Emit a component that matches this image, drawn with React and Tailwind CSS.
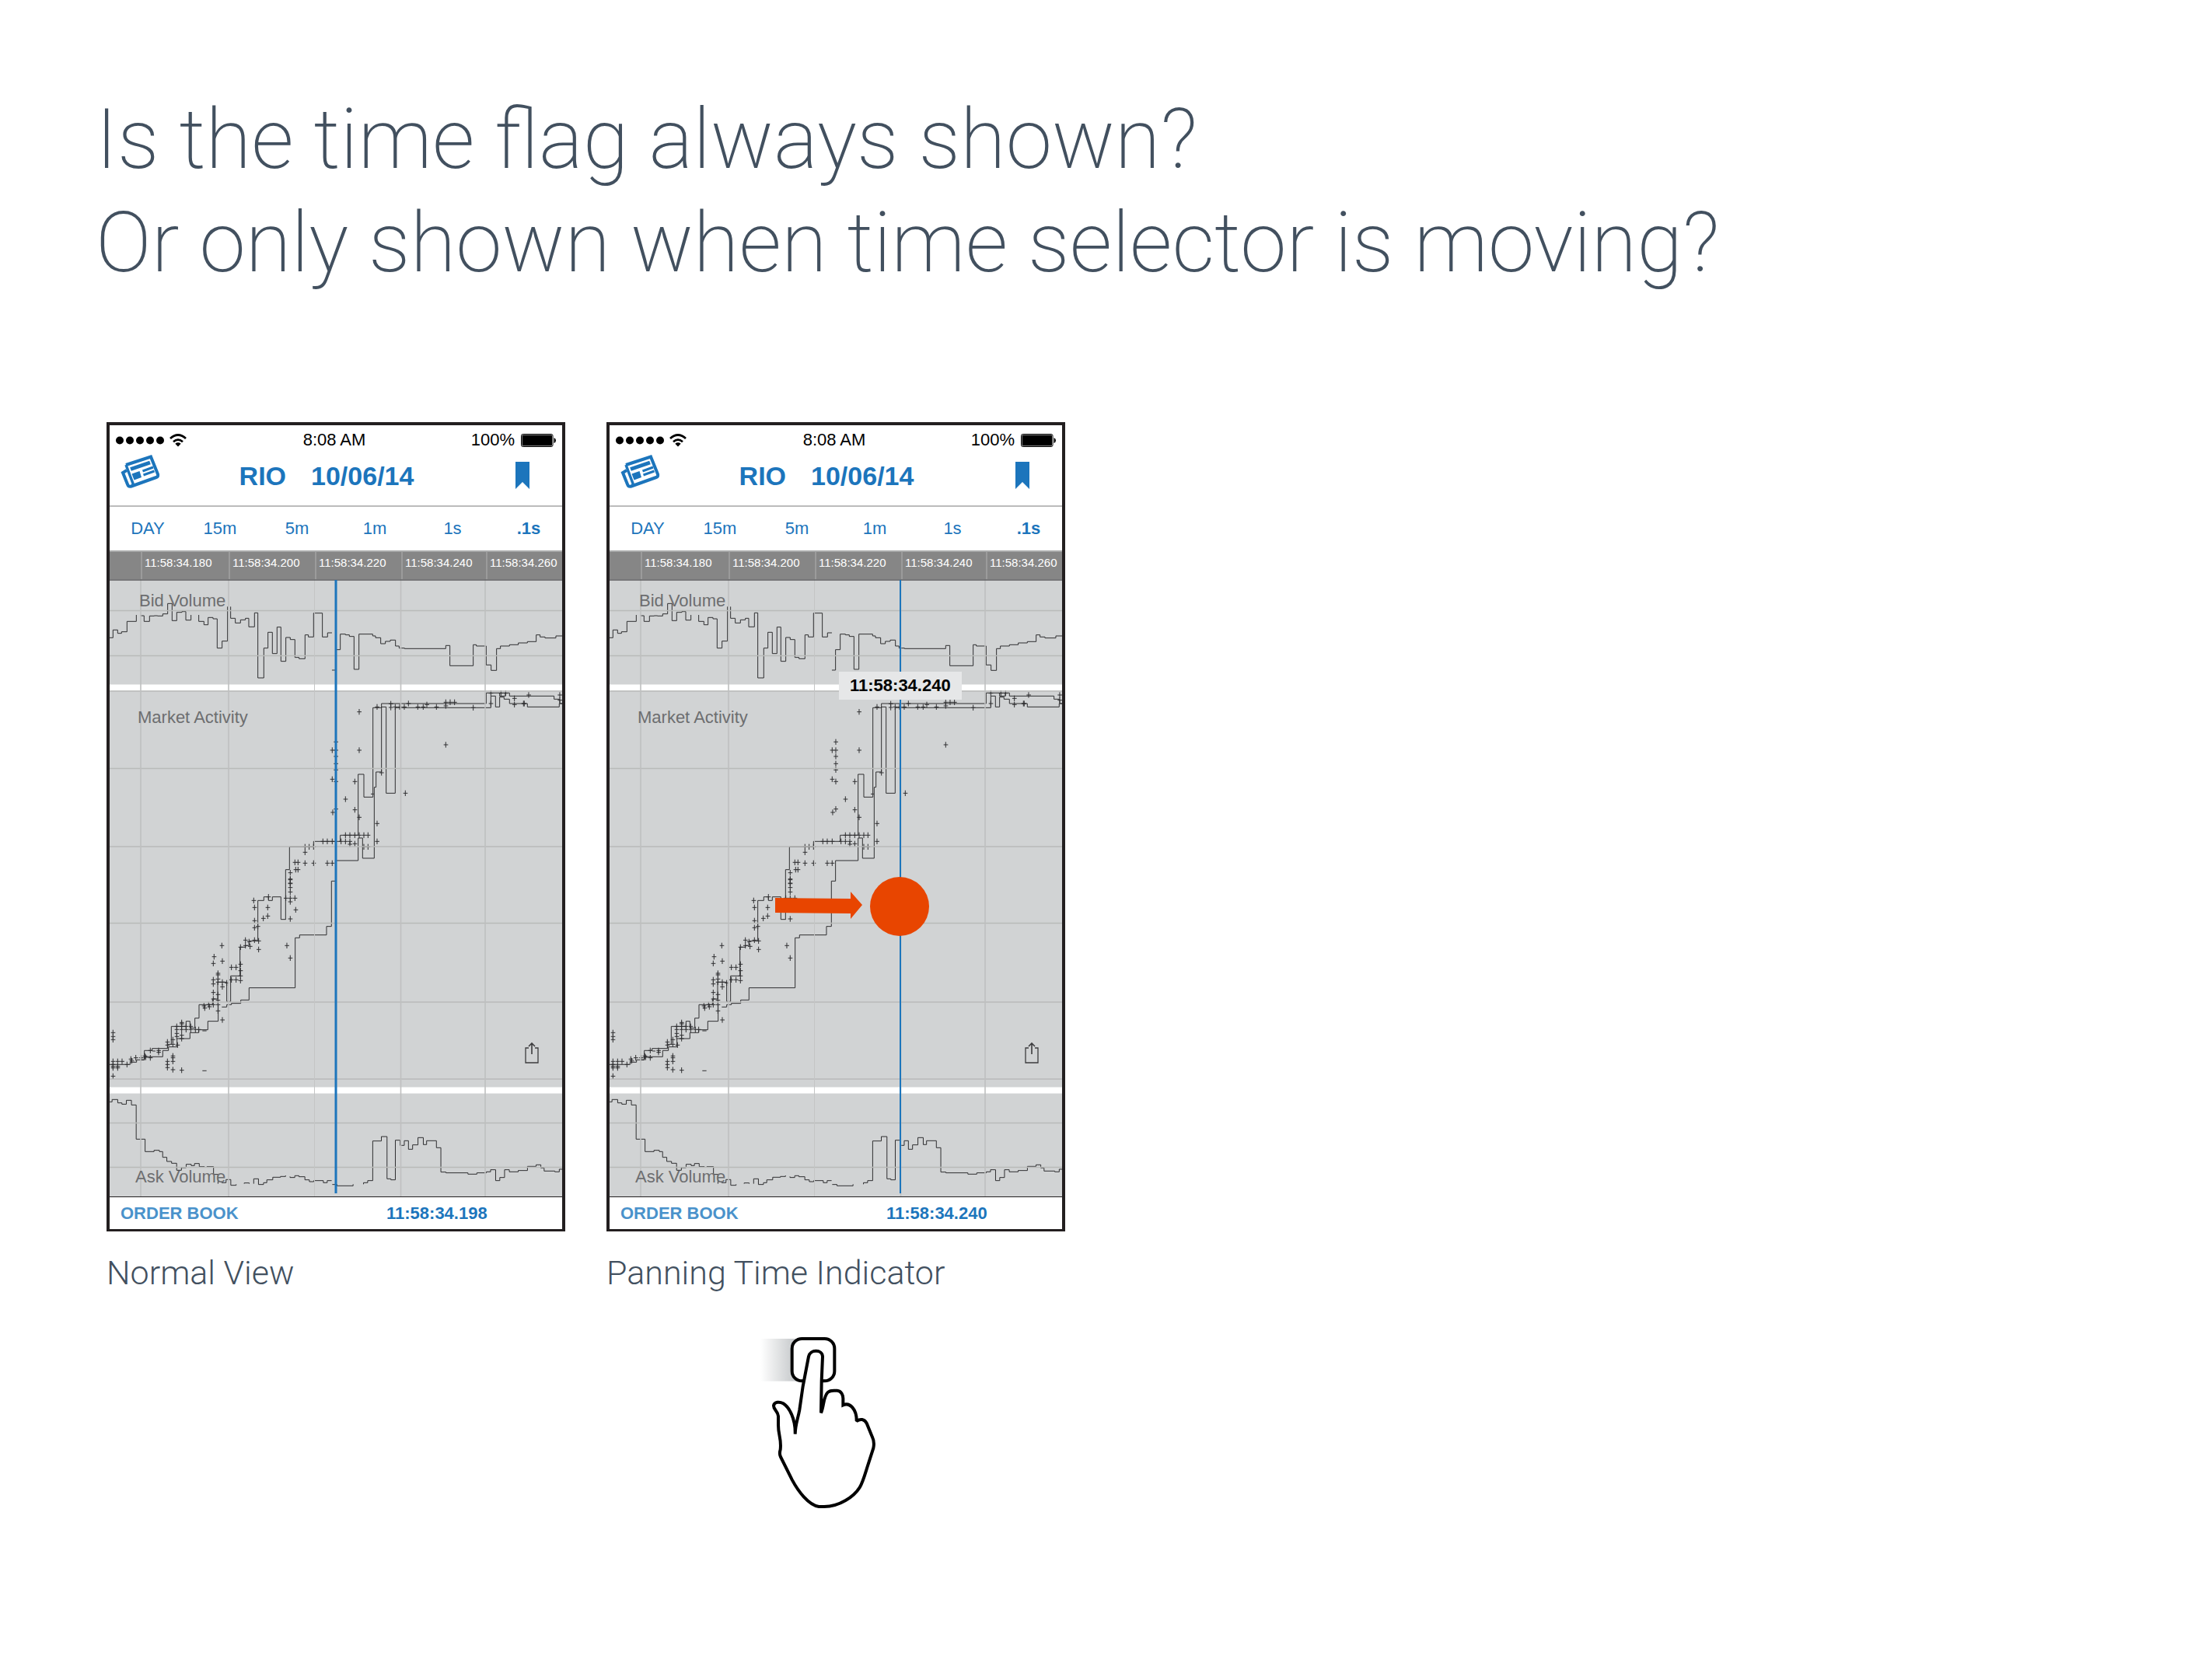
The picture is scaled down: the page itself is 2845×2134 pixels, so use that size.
import React from "react";

const TRACE = "fill-none stroke-[#2f2f31] stroke-[1px]";

const BID_LEFT =
  "M33 241H46V211H64V224H79V218H100V178H136V153M151 156H166V178H187V157H205V156H218V157H238V149H257V109H274V175H292V143H312V140H327V173H347V153M377 153V178H397V191H413V163H432V168H448V281H467V254H488V121M500 121V166H518V184H538V172H557V166H570V199H592V145H605V396H628V281H644V220H661V302H679V200H694V332H713V240H730V248H748V317H764V322H787V230H800V238H820V146H854V238H874V222H891M891 366H905V287H909";
const BID_RIGHT =
  "M9 287H23V227H43V230H58V236H76V363H95V227H148V234H159V241H179V264H197V255H216V250H236V273H250V281H271V283H430V271H446V349H536V268H548V273H586V346H605V367H626V283H641V273H676V268H710V261H745V256H779V230H794V238H813V242H855V234H880";
const MARKET_UPPER =
  "M-188 908V716H-173V628H-80V607H23V583H92V348H114V436H149V91H182V75H586V34H676V46H848V58H870V75H880";
const MARKET_INNER =
  "M5 681H92V594H109V672H154V398H161V339H182V88H200V421H235V91H604V46H622V88H638V50H655V58H676V75H745V88H868V75H880M638 34V46H660V34";
const MARKET_LOW =
  "M33 718H112V709H137V700H167V664H197V656H257V640H271V571H328V551H343V577H362V539H378V487H430V465H450V400H485V475H500V376H536V265H557V259H571V241H605V85H628V71H646V85H661V71H694V158H713M155 700H167V688H238V664H260V650H293V618H343V595H377V584H412V551H452V487M466 496H485V487H503V482H539V469H571V422H749V229H766V218H870V185H889V10H905V-69";
const ASK =
  "M29 82H37V73H56V86H70V91H85V76H102V94H118V226H148V274H178V269H196V274H207V296H221V312H237V319H254V346H270V336H286V323H303V328H314V320H330V332H348M355 332H378V362H393V398M405 394H420V382H436V404H454V400M481 398V395H498V398M513 398V379H529V401H546V394H557V383H577V373H603V370H620V366M635 370V374H651V367H665V371H685V383H700V390H715V386H747V394H760V386H775M777 401H793V406H847V400M882 400V394H896V386H913V233H942V216H961V379H974V383H989V230H1005V250H1019V232H1033V265H1047V248H1065V220H1083V247H1094V232H1127V259H1142V353H1159V356H1233V361H1263V356H1295V352H1309V344H1326V386H1340V374H1356V344H1372V352H1402V347H1433V331H1462V325H1478V337H1489V349H1525V352H1540V342H1552";

const TRADES_LOW = [
  [46, 595], [46, 610], [46, 622], [46, 706], [46, 718], [46, 725], [46, 731], [46, 763], [64, 706], [64, 725],
  [64, 731], [81, 706], [100, 718], [115, 697], [118, 704], [134, 692], [155, 692], [169, 685], [172, 690],
  [190, 664], [190, 692], [222, 664], [222, 671], [256, 631], [256, 643], [256, 706], [256, 718], [256, 730],
  [277, 622], [277, 640], [277, 685], [277, 692], [277, 706], [277, 738], [292, 571], [292, 583], [292, 598],
  [292, 610], [295, 643], [311, 556], [311, 561], [311, 571], [311, 583], [311, 605], [311, 618], [311, 740],
  [328, 571], [328, 583], [346, 571], [346, 583], [364, 583], [377, 583], [397, 492], [400, 500], [415, 487],
  [418, 495], [433, 328], [436, 302], [433, 391], [433, 407], [433, 440], [433, 465], [433, 487], [451, 366],
  [451, 372], [451, 388], [451, 400], [451, 448], [451, 470], [451, 487], [451, 511], [466, 259], [468, 319],
  [468, 400], [468, 418], [468, 546], [485, 403], [503, 343], [521, 343], [503, 391], [521, 391], [538, 331],
  [538, 356], [538, 376], [538, 394], [538, 265], [557, 238], [557, 259], [571, 244], [575, 262], [592, 238],
  [608, 241], [608, 274], [592, 163], [592, 190], [605, 185], [592, 112], [589, 85], [626, 154], [643, 145],
  [643, 112], [646, 71], [713, 76], [730, 76], [748, 76], [751, 121], [730, 156], [730, 90], [717, 259],
  [730, 307], [730, 52], [730, 35], [730, 20], [730, 5],
];
const TRADES_MID = [
  [730, 728], [730, 752], [730, 768], [748, 688], [760, 688], [751, 716], [760, 716], [787, 649], [787, 628],
  [803, 628], [820, 628], [787, 691], [820, 691], [873, 691], [892, 691], [856, 607], [873, 607], [892, 607],
  [894, 495], [892, 367], [892, 255], [906, 223], [906, 255], [906, 279], [906, 307], [906, 331], [906, 376],
  [906, 482],
];
const TRADES_HIGH = [
  [96, 107], [96, 255], [79, 376], [43, 444], [79, 485], [96, 514], [165, 538], [165, 607], [26, 607], [43, 607],
  [60, 607], [43, 583], [60, 583], [79, 583], [96, 583], [114, 583], [130, 583], [60, 618], [79, 616],
  [114, 628], [130, 628], [165, 88], [218, 76], [218, 90], [235, 88], [252, 88], [270, 88], [286, 75], [322, 88],
  [343, 88], [357, 79], [394, 88], [430, 70], [430, 84], [447, 70], [464, 70], [536, 91], [430, 234], [274, 421],
  [182, 342], [604, 35], [604, 75], [643, 35], [661, 35], [695, 55], [695, 79], [730, 75], [733, 75], [750, 42],
  [870, 42], [870, 62],
];

const plus = (points) => points.map(([x, y]) => `M${x - 8} ${y}h17M${x} ${y - 11}v22`).join("");

function Trace({ d, at, scale = "0.3333" }) {
  return (
    <g transform={`translate(${at}) scale(${scale})`}>
      <path d={d} vectorEffect="non-scaling-stroke" className={TRACE} />
    </g>
  );
}

function Chart({ selector, panning }) {
  return (
    <svg viewBox="0 0 582 795" className="block h-auto w-full" role="img" aria-label="Market activity chart">
      <rect width="582" height="795" fill="#d1d3d4" />
      <rect y="135" width="582" height="9" fill="#e9eaea" />
      <rect y="136" width="582" height="7" fill="#ffffff" />
      <rect y="653" width="582" height="9" fill="#e9eaea" />
      <rect y="654" width="582" height="7" fill="#ffffff" />
      <Trace d={BID_LEFT} at="-11 -5" />
      <Trace d={BID_RIGHT} at="289 -5" />
      <Trace d={MARKET_UPPER} at="289 135" />
      <Trace d={MARKET_INNER} at="289 135" />
      <Trace d={MARKET_LOW} at="-11 385" />
      <Trace d={plus(TRADES_LOW) + "M391 588h16M391 742h16M198 666h12"} at="-11 385" />
      <Trace d={plus(TRADES_MID)} at="-11 135" />
      <Trace d={plus(TRADES_HIGH) + "M141 424h12"} at="289 135" />
      <Trace d={ASK} at="-11 645" scale="0.3827 0.3333" />
      <path
        d="M0 40.5H582M0 98.5H582M0 144H582M0 243.5H582M0 344H582M0 442.5H582M0 544H582M0 643H582M0 699.5H582M0 756.5H582"
        stroke="#b9bab9"
        strokeWidth="1.4"
      />
      <path d="M40 0V795M153 0V795M374.5 0V795M483 0V795" stroke="#bfc0c0" strokeWidth="1.6" />
      <path d="M263.5 0V795" stroke="#c4c5c5" strokeWidth="1" />
      <path d="M0 1H582" stroke="#58595b" strokeWidth="1.5" />
      <path d="M0 794.5H582" stroke="#231f20" strokeWidth="1" />
      <path d={`M${selector} 1V790`} stroke="#1c75bc" strokeWidth={panning ? "2" : "3"} />
      {panning && (
        <g fill="#e84500">
          <circle cx="373" cy="421" r="38" />
          <path d="M213 410L310 411V402L325 419L310 437V430L213 429Z" />
        </g>
      )}
    </svg>
  );
}

function NewsIcon() {
  return (
    <svg viewBox="0 0 52 44" className="h-11 w-13" fill="none" stroke="#1c75bc">
      <path d="M7 13L39 2.500L48 25Q49 28 46 29L14 40.500Q10 41.500 9 38L3 23L8 20" strokeWidth="4" />
      <path d="M7 13L16 37Q16.500 39 14 40" strokeWidth="3.500" />
      <path d="M13 18.500L38 10" strokeWidth="5" />
      <path d="M28.500 21L42 16M29.500 26L43.500 21" strokeWidth="3" />
      <path d="M14.500 24.500L24.500 21L27 29L17.500 32.500Z" fill="#1c75bc" stroke="none" />
    </svg>
  );
}

function WifiIcon() {
  return (
    <svg viewBox="0 0 22 17" className="h-[17px] w-[22px]" fill="none" stroke="#000" strokeWidth="2.800">
      <path d="M1 6Q11 -3 21 6" />
      <path d="M5 10.200Q11 5 17 10.200" />
      <path d="M11 16.500L7.300 12.700Q11 9.800 14.700 12.700Z" fill="#000" stroke="none" />
    </svg>
  );
}

function StatusBar() {
  return (
    <div className="grid h-[38px] grid-cols-[1fr_auto_1fr] items-center px-2 text-[22px] leading-7 text-black">
      <div className="flex items-center gap-[7px]">
        <svg viewBox="0 0 62 10" className="h-[11px] w-[62px]">
          {[5, 18, 31, 44, 57].map((x) => (
            <circle key={x} cx={x} cy="5" r="5" />
          ))}
        </svg>
        <WifiIcon />
      </div>
      <span className="pr-1">8:08 AM</span>
      <div className="flex items-center justify-end gap-2">
        <span>100%</span>
        <svg viewBox="0 0 45 17" className="h-[17px] w-[45px]">
          <rect x="0.500" y="0.500" width="40.500" height="16" rx="2" fill="#fff" stroke="#000" />
          <rect x="1.500" y="1.500" width="38.500" height="14" rx="1" />
          <path d="M42.500 5Q45 6 45 8.500T42.500 12Z" />
        </svg>
      </div>
    </div>
  );
}

const RANGES = ["DAY", "15m", "5m", "1m", "1s", ".1s"];
const TICKS = ["", "11:58:34.180", "11:58:34.200", "11:58:34.220", "11:58:34.240", "11:58:34.260"];

function Phone({ time, selector, panning }) {
  return (
    <div className="w-full border-4 border-b-[3px] border-[#231f20] bg-white font-['Liberation_Sans',Arial,sans-serif]">
      <StatusBar />
      <header className="grid h-[67px] grid-cols-[1fr_auto_1fr] items-center border-b-2 border-[#bcbcbc] pr-[42px] pb-3 pl-[14px] text-[#1c75bc]">
        <button type="button" aria-label="News" className="self-start justify-self-start">
          <NewsIcon />
        </button>
        <h2 className="flex gap-8 pl-1 text-[34px] leading-10 font-bold">
          <span>RIO</span>
          <span>10/06/14</span>
        </h2>
        <button type="button" aria-label="Bookmark" className="justify-self-end">
          <svg viewBox="0 0 18 35" className="h-[35px] w-[18px]" fill="#1c75bc">
            <path d="M0 0H18V35L9 26L0 35Z" />
          </svg>
        </button>
      </header>
      <nav className="grid h-14 grid-cols-[98fr_88fr_110fr_90fr_110fr_86fr] items-center text-[22px] leading-7 text-[#1c75bc]">
        {RANGES.map((label) => (
          <button key={label} type="button" className={label === ".1s" ? "text-center font-bold" : "text-center"}>
            {label}
          </button>
        ))}
      </nav>
      <div className="grid h-[37px] grid-cols-[40fr_113fr_111fr_111fr_109fr_98fr] border-t-2 border-[#a8a9a9] bg-[#868686] text-[15px] leading-7 text-white">
        {TICKS.map((tick, i) => (
          <span key={i} className={i === 0 ? "" : "border-l-2 border-[#9b9b9b] pl-[3px]"}>
            {tick}
          </span>
        ))}
      </div>
      <div className="relative text-[22px] leading-7 text-[#6d6e70]">
        <Chart selector={selector} panning={panning} />
        <span className="absolute top-[14px] left-[38px]">Bid Volume</span>
        <span className="absolute top-[164px] left-9">Market Activity</span>
        <span className="absolute bottom-[12px] left-[33px]">Ask Volume</span>
        {panning && (
          <output className="absolute top-[119px] left-[295px] bg-[#e6e7e8] px-[14px] py-1 font-bold text-black">{time}</output>
        )}
        <button type="button" aria-label="Share" className="absolute right-[30px] bottom-[172px]">
          <svg viewBox="0 0 18 28" className="h-7 w-[18px]" fill="none" stroke="#3c3c3e" strokeWidth="1.300">
            <path d="M5 8H1V27H17V8H13" />
            <path d="M9 16V2M5 6L9 2L13 6" strokeWidth="1.600" />
          </svg>
        </button>
      </div>
      <footer className="grid h-[41px] grid-cols-[356fr_226fr] items-center text-[22px] leading-7 font-bold text-[#1c75bc]">
        <button type="button" className="pl-[14px] text-left text-[#4a92cb]">
          ORDER BOOK
        </button>
        <time>{time}</time>
      </footer>
    </div>
  );
}

function PanGesture() {
  return (
    <svg viewBox="0 0 570 780" className="h-[260px] w-[190px]" role="img" aria-label="Drag with one finger">
      <defs>
        <linearGradient id="trail">
          <stop offset="0" stopColor="#ffffff" />
          <stop offset="1" stopColor="#c3c6c8" />
        </linearGradient>
      </defs>
      <rect x="54" y="66" width="140" height="164" fill="url(#trail)" />
      <g fill="#fff" stroke="#000" strokeWidth="12">
        <rect x="176" y="66" width="164" height="163" rx="38" />
        <path
          d="M188 434C189 395 199 375 205 340L218 250L240 135C245 106 293 106 294 135L290 230L288 352C300 325 296 290 315 272Q322 266 338 266H350C366 267 374 285 373 300V322C400 310 426 340 425 384C440 374 455 376 464 392L486 446Q495 464 490 488L470 550C460 580 450 620 437 640C415 675 360 714 300 714H280C240 708 200 655 176 610L132 522Q126 510 131 494C136 450 122 440 123 395V365C122 345 104 340 105 324C108 309 128 308 142 316C165 330 190 375 188 434Z"
          strokeLinejoin="miter"
          strokeMiterlimit="2"
        />
      </g>
    </svg>
  );
}

function Screen({ caption, children, ...phone }) {
  return (
    <figure className="w-full max-w-[590px]">
      <Phone {...phone} />
      <figcaption className="mt-[26px] font-['Roboto','Helvetica_Neue',sans-serif] text-[43px] leading-[54px] font-light">
        {caption}
      </figcaption>
      {children}
    </figure>
  );
}

export default function App() {
  return (
    <main className="min-h-screen bg-white pb-32 text-[#42505f]">
      <h1 className="px-[123px] pt-[113px] font-['Roboto','Helvetica_Neue',sans-serif] text-[107px] leading-[133px] font-extralight">
        Is the time flag always shown?
        <br />
        Or only shown when time selector is moving?
      </h1>
      <section className="mt-[164px] flex items-start gap-[53px] px-[137px]">
        <Screen caption="Normal View" time="11:58:34.198" selector={291} />
        <Screen caption="Panning Time Indicator" time="11:58:34.240" selector={374} panning>
          <div className="mt-9 ml-[180px]">
            <PanGesture />
          </div>
        </Screen>
      </section>
    </main>
  );
}
